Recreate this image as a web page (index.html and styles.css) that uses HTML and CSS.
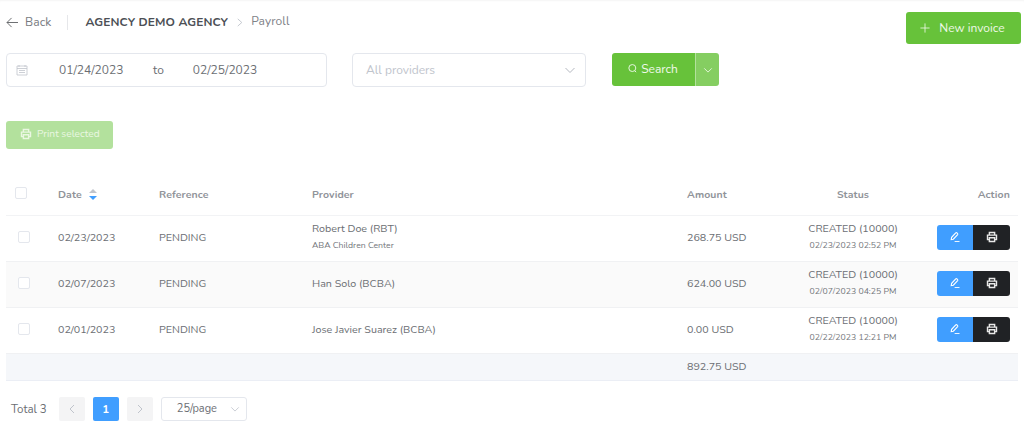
FILE: index.html
```html
<!DOCTYPE html>
<html lang="en">
<head>
<meta charset="utf-8">
<title>Payroll</title>
<link rel="stylesheet" href="styles.css">
</head>
<body>
<svg class="sprite" width="0" height="0" aria-hidden="true">
  <symbol id="i-print" viewBox="0 0 16 16"><path d="M4.500 5V2h7v3M4.500 11.500H2V5.500h12v6h-2.500M4.500 9h7v5h-7z" fill="none" stroke="currentColor" stroke-width="1.900"/></symbol>
  <symbol id="i-edit" viewBox="0 0 16 16"><path d="M3 11.500 3.500 8.500 9 2.500c1-1 3.500 1 2.500 2.300L5.800 11z" fill="none" stroke="currentColor" stroke-width="1.500"/><path d="M7.500 14H14" fill="none" stroke="currentColor" stroke-width="1.200"/></symbol>
  <symbol id="i-chev" viewBox="0 0 12 12"><path d="M1.500 4 6 8.500 10.500 4" fill="none" stroke="currentColor" stroke-width="1"/></symbol>
</svg>
<main class="page">
  <header class="topbar">
    <div class="crumbs">
      <a class="back"><svg class="back-icon" viewBox="0 0 14 12"><path d="M13 6H1M6 1 1 6l5 5" fill="none" stroke="currentColor"/></svg>Back</a>
      <span class="divider"></span>
      <strong class="agency">AGENCY DEMO AGENCY</strong>
      <svg class="crumb-sep" viewBox="0 0 8 10"><path d="M1.500 1 6 5 1.500 9" fill="none" stroke="currentColor"/></svg>
      <span class="crumb-page">Payroll</span>
    </div>
    <button class="btn-new"><svg class="plus" viewBox="0 0 12 12"><path d="M6 .5v11M.5 6h11" stroke="currentColor" fill="none"/></svg>New invoice</button>
  </header>

  <section class="filters">
    <div class="date-range">
      <svg class="cal" viewBox="0 0 12 12"><path d="M1 2h10v9H1zM1 4.500h10M3 1v2M9 1v2M3 6.500h6M3 8.500h6" fill="none" stroke="currentColor" stroke-width=".8"/></svg>
      <span class="date-val">01/24/2023</span>
      <span class="date-to">to</span>
      <span class="date-val">02/25/2023</span>
    </div>
    <div class="select-providers">
      <span>All providers</span>
      <svg class="chev"><use href="#i-chev"/></svg>
    </div>
    <div class="search-group">
      <button class="btn-search"><svg class="search-icon" viewBox="0 0 12 12"><circle cx="5.800" cy="5.500" r="3.800" fill="none" stroke="currentColor"/><path d="m8.500 8.500 1.500 1.500" stroke="currentColor"/></svg>Search</button>
      <button class="btn-drop"><svg class="chev-small"><use href="#i-chev"/></svg></button>
    </div>
  </section>

  <button class="btn-print-selected"><svg class="print-icon"><use href="#i-print"/></svg>Print selected</button>

  <table class="grid">
    <colgroup>
      <col class="c-check"><col class="c-date"><col class="c-ref"><col class="c-prov"><col class="c-amt"><col class="c-status"><col class="c-action">
    </colgroup>
    <thead>
      <tr>
        <th class="cell-check"><span class="box box-head"></span></th>
        <th>Date <span class="sort"><i class="up"></i><i class="down"></i></span></th>
        <th>Reference</th>
        <th>Provider</th>
        <th>Amount</th>
        <th class="center">Status</th>
        <th class="right">Action</th>
      </tr>
    </thead>
    <tbody>
      <tr>
        <td class="cell-check"><span class="box"></span></td>
        <td>02/23/2023</td>
        <td>PENDING</td>
        <td class="stack"><div>Robert Doe (RBT)</div><div class="sub">ABA Children Center</div></td>
        <td>268.75 USD</td>
        <td class="center stack"><div>CREATED (10000)</div><div class="sub">02/23/2023 02:52 PM</div></td>
        <td class="right"><span class="actions"><button class="act act-edit"><svg class="act-icon"><use href="#i-edit"/></svg></button><button class="act act-print"><svg class="act-icon"><use href="#i-print"/></svg></button></span></td>
      </tr>
      <tr class="alt">
        <td class="cell-check"><span class="box"></span></td>
        <td>02/07/2023</td>
        <td>PENDING</td>
        <td>Han Solo (BCBA)</td>
        <td>624.00 USD</td>
        <td class="center stack"><div>CREATED (10000)</div><div class="sub">02/07/2023 04:25 PM</div></td>
        <td class="right"><span class="actions"><button class="act act-edit"><svg class="act-icon"><use href="#i-edit"/></svg></button><button class="act act-print"><svg class="act-icon"><use href="#i-print"/></svg></button></span></td>
      </tr>
      <tr>
        <td class="cell-check"><span class="box"></span></td>
        <td>02/01/2023</td>
        <td>PENDING</td>
        <td>Jose Javier Suarez (BCBA)</td>
        <td>0.00 USD</td>
        <td class="center stack"><div>CREATED (10000)</div><div class="sub">02/22/2023 12:21 PM</div></td>
        <td class="right"><span class="actions"><button class="act act-edit"><svg class="act-icon"><use href="#i-edit"/></svg></button><button class="act act-print"><svg class="act-icon"><use href="#i-print"/></svg></button></span></td>
      </tr>
    </tbody>
    <tfoot>
      <tr>
        <td></td><td></td><td></td><td></td>
        <td>892.75 USD</td>
        <td></td><td></td>
      </tr>
    </tfoot>
  </table>

  <nav class="pager">
    <span class="total">Total 3</span>
    <span class="pg pg-nav"><svg class="pg-arrow" viewBox="0 0 8 10"><path d="M6 1 2 5l4 4" fill="none" stroke="currentColor"/></svg></span>
    <span class="pg pg-on">1</span>
    <span class="pg pg-nav"><svg class="pg-arrow" viewBox="0 0 8 10"><path d="m2 1 4 4-4 4" fill="none" stroke="currentColor"/></svg></span>
    <span class="pg-size">25/page<svg class="chev-pg"><use href="#i-chev"/></svg></span>
  </nav>
</main>
</body>
</html>
```

FILE: styles.css
```css
* { box-sizing: border-box; }
html, body { margin: 0; padding: 0; background: #fff; }
body {
  font-family: "Nunito", "Lato", "Noto Sans", sans-serif;
  font-size: 12px;
  color: #606266;
  height: 428px;
  overflow: hidden;
}
.sprite { position: absolute; }
button { font-family: inherit; border: 0; cursor: pointer; }

.page {
  padding: 0 6px;
  box-shadow: inset 0 2px 2px -1px #f5f5f5;
  height: 428px;
}

.topbar {
  display: flex;
  justify-content: space-between;
  align-items: flex-start;
  margin-right: -3px;
  padding-top: 12px;
  height: 53px;
}
.crumbs { display: flex; align-items: center; height: 20px; }
.back { display: flex; align-items: center; font-size: 12px; color: #777a80; letter-spacing: .1px; }
.back-icon { width: 13px; height: 11px; margin-right: 6px; color: #606266; }
.divider { width: 1px; height: 15px; background: #e6e7ea; margin: 0 17px 0 16px; }
.agency { font-size: 12px; font-weight: 700; color: #4c4f55; letter-spacing: .1px; }
.crumb-sep { width: 8px; height: 9px; margin: 0 7px 0 8px; color: #c0c4cc; }
.crumb-page { font-size: 12px; color: #7f8288; margin-top: -2px; letter-spacing: .1px; }

.btn-new {
  display: flex;
  align-items: center;
  justify-content: center;
  width: 115px;
  height: 32px;
  padding: 0 2px 0 0;
  background: #67c23a;
  color: #eef8e8;
  border-radius: 3px;
  font-size: 12px;
}
.plus { width: 10px; height: 10px; margin-right: 9px; }

.filters { display: flex; align-items: flex-start; }
.date-range {
  display: flex;
  align-items: center;
  width: 321px;
  height: 34px;
  padding: 0 0 1px 9px;
  border: 1px solid #e4e7ed;
  border-radius: 4px;
  font-size: 12px;
  color: #6b6e73;
}
.cal { width: 12px; height: 12px; color: #c0c4cc; margin-right: 31px; }
.date-val { width: 65px; }
.date-to { margin: 0 29px 0 29px; }
.select-providers {
  display: flex;
  align-items: center;
  justify-content: space-between;
  width: 234px;
  height: 34px;
  margin-left: 25px;
  padding: 0 9px 1px 13px;
  border: 1px solid #e4e7ed;
  border-radius: 4px;
  font-size: 12px;
  color: #c0c4cc;
}
.chev { width: 12px; height: 12px; color: #b4b8c0; }
.search-group { display: flex; margin-left: 26px; height: 33px; }
.btn-search {
  display: flex;
  align-items: center;
  justify-content: center;
  width: 83px;
  background: #67c23a;
  color: #f0f9eb;
  border-radius: 3px 0 0 3px;
  font-size: 12px;
  padding: 0 2px 2px 0;
}
.search-icon { width: 11px; height: 11px; margin-right: 3px; }
.btn-drop {
  display: flex;
  align-items: center;
  justify-content: center;
  width: 24px;
  padding: 0;
  background: #85ce61;
  border-left: 1px solid #b3e19d;
  color: #f0f9eb;
  border-radius: 0 3px 3px 0;
}
.chev-small { width: 10px; height: 10px; }

.btn-print-selected {
  display: flex;
  align-items: center;
  width: 107px;
  height: 28px;
  margin-top: 34px;
  padding: 0 0 2px 14px;
  background: #b3e19d;
  color: #eaf7e2;
  border-radius: 3px;
  font-size: 10.200px;
}
.print-icon { width: 12px; height: 12px; margin-right: 5px; }

.grid {
  width: 1012px;
  margin-top: 24px;
  border-collapse: collapse;
  table-layout: fixed;
}
.c-check { width: 40px; }
.c-date { width: 101px; }
.c-ref { width: 153px; }
.c-prov { width: 375px; }
.c-amt { width: 100px; }
.c-status { width: 156px; }
.c-action { width: 87px; }

.grid th, .grid td { text-align: left; padding: 0 0 0 12px; font-weight: 400; }
.grid th {
  height: 42px;
  padding-top: 1px;
  font-size: 10.500px;
  font-weight: 700;
  color: #909399;
  letter-spacing: .1px;
  border-bottom: 1px solid #f2f3f5;
}
.grid td {
  height: 46px;
  padding-bottom: 2px;
  font-size: 10.700px;
  color: #6b6e73;
  border-bottom: 1px solid #f0f1f3;
}
.grid .center { text-align: center; padding: 0 0 2px; }
.grid .right { text-align: right; padding: 0 8px 2px 0; }
.grid th.right { padding: 1px 8px 0 0; }
.grid th.center { padding: 1px 0 0; }
.grid .cell-check { padding: 0 0 2px 12px; }
.grid td.stack { padding-bottom: 5px; }
.alt td { background: #fafafa; }
.grid tfoot td { height: 27px; padding-bottom: 0; background: #f5f7fa; border-bottom: 1px solid #ebeef5; }

.box {
  display: block;
  width: 12px;
  height: 12px;
  border: 1px solid #e4e7ed;
  border-radius: 2px;
  background: #fff;
}
.box-head { margin-left: -3px; }
.sort { display: inline-block; position: relative; width: 10px; height: 13px; vertical-align: -3px; margin-left: 3px; }
.sort i { position: absolute; left: 1px; width: 0; height: 0; border: 4px solid transparent; }
.sort .up { top: -3px; border-bottom-color: #c0c4cc; }
.sort .down { bottom: -3px; border-top-color: #409eff; }
.sub { font-size: 8.700px; margin-top: 3px; color: #73767b; }

.actions { display: inline-flex; vertical-align: middle; }
.act {
  display: flex;
  align-items: center;
  justify-content: center;
  width: 36px;
  height: 25px;
  padding: 0;
  color: #fff;
}
.act-edit { background: #409eff; border-radius: 3px 0 0 3px; }
.act-print { background: #202225; border-radius: 0 3px 3px 0; color: #e8e8e8; width: 37px; }
.act-icon { width: 12px; height: 12px; }

.pager { display: flex; align-items: center; margin-top: 16px; padding-left: 5px; font-size: 11.500px; }
.total { color: #6b6e73; margin-right: 12px; }
.pg {
  display: flex;
  align-items: center;
  justify-content: center;
  width: 26px;
  height: 24px;
  margin-right: 8px;
  border-radius: 2px;
  background: #f4f4f5;
  color: #c0c4cc;
}
.pg-on { background: #409eff; color: #fff; font-weight: 700; }
.pg-arrow { width: 8px; height: 10px; }
.pg-size {
  display: flex;
  align-items: center;
  justify-content: space-between;
  width: 86px;
  height: 24px;
  padding: 0 6px 0 15px;
  border: 1px solid #e4e7ed;
  border-radius: 3px;
  color: #6b6e73;
  font-size: 11px;
}
.chev-pg { width: 10px; height: 10px; color: #c0c4cc; }
```
